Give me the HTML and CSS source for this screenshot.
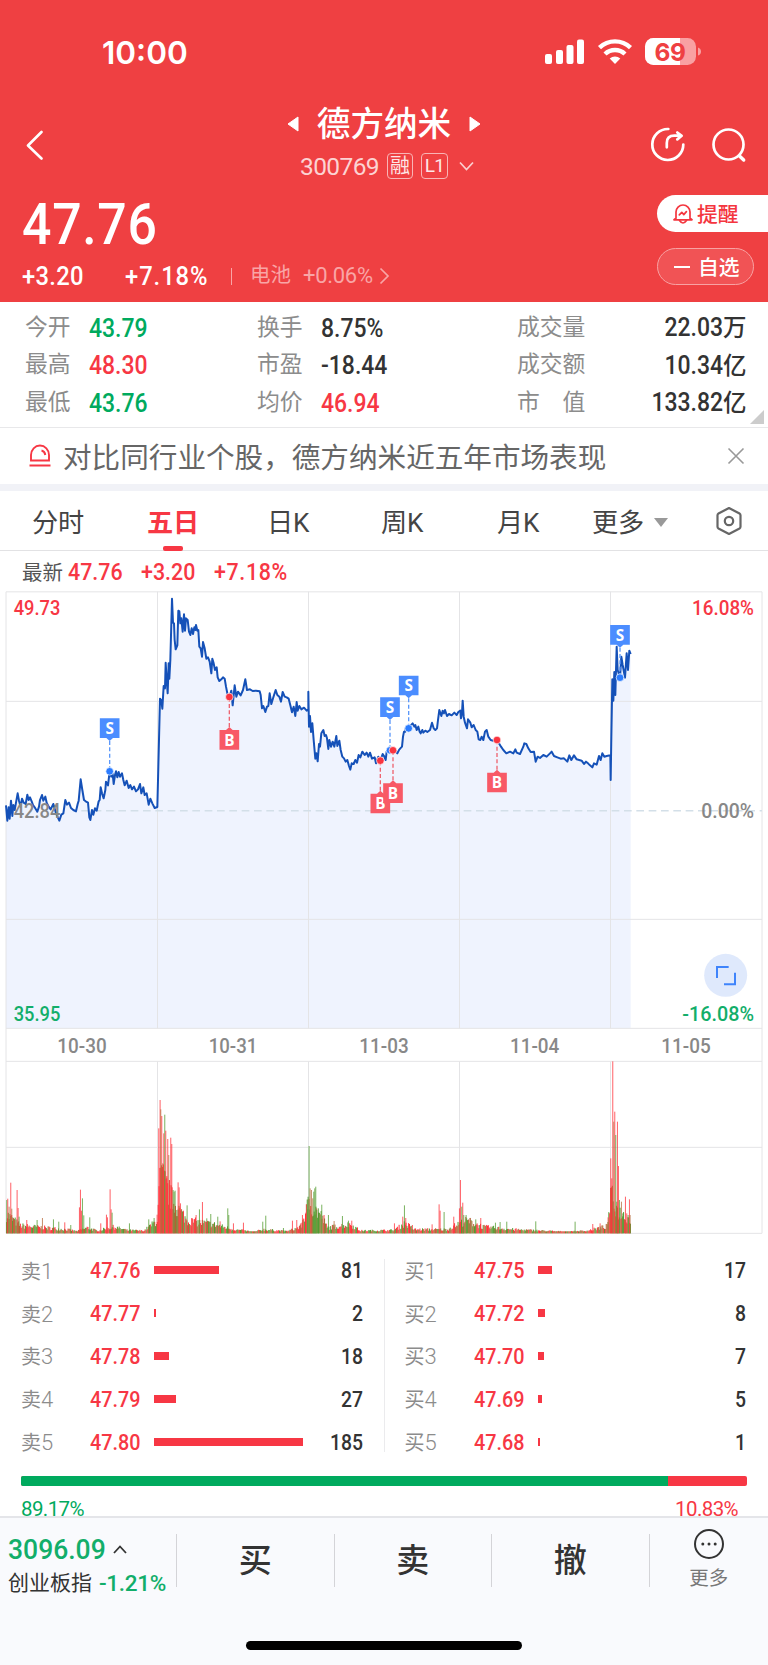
FILE: index.html
```html
<!DOCTYPE html>
<html lang="zh-CN">
<head>
<meta charset="utf-8">
<title>德方纳米 300769</title>
<link rel="stylesheet" href="styles.css">
</head>
<body>
<div class="app">
  <header class="hero">
    <div class="status">
      <span class="clock">10:00</span>
      <svg class="status-icons" width="160" height="38" viewBox="0 -5 160 38">
        <g fill="#fff">
          <rect x="1" y="16" width="7" height="10" rx="2"/><rect x="12" y="12" width="7" height="14" rx="2"/>
          <rect x="22.500" y="7" width="7" height="19" rx="2"/><rect x="33" y="1.500" width="7" height="24.500" rx="2"/>
          <path d="M71 26l-5.300-5.600a8 8 0 0 1 10.600 0z"/>
        </g>
        <g fill="none" stroke="#fff" stroke-width="4.400">
          <path d="M55.500 9.600a22.500 22.500 0 0 1 31 0"/><path d="M61 16a14.500 14.500 0 0 1 20 0"/>
        </g>
        <rect x="101" y="0" width="51" height="27" rx="8.500" fill="#f9a0a2"/>
        <path d="M109.500 0H136v27h-26.500a8.500 8.500 0 0 1-8.500-8.500v-10a8.500 8.500 0 0 1 8.500-8.500z" fill="#fff"/>
        <path d="M154 9.500q3 1 3 4t-3 4z" fill="#f9a0a2"/>
        <text x="126" y="22.500" text-anchor="middle" class="battery-text">69</text>
      </svg>
    </div>
    <div class="nav">
      <svg class="back" width="20" height="30" viewBox="0 0 20 30"><path d="M16.500 2L3 15.500l13.500 13" fill="none" stroke="#fff" stroke-width="2.600" stroke-linecap="round" stroke-linejoin="round"/></svg>
      <div class="name-block">
        <div class="name-row">
          <svg width="12" height="18" viewBox="0 0 12 18"><path d="M11 2v14L1 9z" fill="#fff" stroke="#fff" stroke-linejoin="round"/></svg>
          <h1 class="name">德方纳米</h1>
          <svg width="12" height="18" viewBox="0 0 12 18"><path d="M1 2v14L11 9z" fill="#fff" stroke="#fff" stroke-linejoin="round"/></svg>
        </div>
        <div class="code-row">
          <span class="code">300769</span><span class="tag">融</span><span class="tag tag-l">L1</span>
          <svg width="15" height="10" viewBox="0 0 15 10"><path d="M1 1.500l6.500 7 6.500-7" fill="none" stroke="#fbd0d0" stroke-width="1.700"/></svg>
        </div>
      </div>
      <div class="nav-icons">
        <svg width="36" height="36" viewBox="0 0 36 36" fill="none" stroke="#fff" stroke-width="2.700" stroke-linecap="round" stroke-linejoin="round">
          <path d="M18.300 2A15.500 15.500 0 1 0 33.300 17.500"/><path d="M16.800 20.300v-4.300q0-7.300 7.500-7.300h6.500M27.300 5.500l4.400 3.300-4.400 3.600"/>
        </svg>
        <svg width="36" height="36" viewBox="0 0 36 36" fill="none" stroke="#fff" stroke-width="2.700" stroke-linecap="round">
          <circle cx="17.500" cy="17.500" r="15"/><path d="M28.500 29l4.200 4" stroke-width="3.400"/>
        </svg>
      </div>
    </div>
    <div class="quote">
      <div class="quote-main">
        <div class="price">47.76</div>
        <div class="change-row">
          <span class="chg">+3.20</span><span class="chg pct">+7.18%</span><i class="bar-sep"></i>
          <span class="sector">电池</span><span class="sector-num">+0.06%</span>
          <svg width="11" height="18" viewBox="0 0 11 18"><path d="M1.500 1.500L9 9l-7.500 7.500" fill="none" stroke="#f9a5a6" stroke-width="1.700"/></svg>
        </div>
      </div>
      <div class="actions">
        <div class="remind">
          <svg width="22" height="22" viewBox="0 0 22 22" fill="none" stroke="#f4363f" stroke-width="1.700" stroke-linejoin="round" stroke-linecap="round">
            <path d="M4 15.300V9a7 7 0 0 1 14 0v6.300l2 1.500H2z"/><path d="M7.500 17.500q3.500 5 7 0M7.300 11.800l2.500-2.500 2 2.300 2.600-3"/>
          </svg><span>提醒</span>
        </div>
        <div class="watch"><i></i><span>自选</span></div>
      </div>
    </div>
  </header>

  <section class="stats">
    <span class="k">今开</span><span class="v down">43.79</span><span class="k">换手</span><span class="v">8.75%</span><span class="k">成交量</span><span class="v r">22.03<b>万</b></span>
    <span class="k">最高</span><span class="v up">48.30</span><span class="k">市盈</span><span class="v">-18.44</span><span class="k">成交额</span><span class="v r">10.34<b>亿</b></span>
    <span class="k">最低</span><span class="v down">43.76</span><span class="k">均价</span><span class="v up">46.94</span><span class="k">市　值</span><span class="v r">133.82<b>亿</b></span>
    <i class="corner"></i>
  </section>

  <section class="notice">
    <svg width="24" height="24" viewBox="0 0 24 24" fill="none" stroke="#f73744" stroke-width="1.900"><path d="M3 16.500V11a9 9.500 0 0 1 18 0v5.500zM1.500 21.500h21"/><path d="M13.500 6.500q3.300.8 3.800 4.500"/></svg>
    <span class="notice-text">对比同行业个股，德方纳米近五年市场表现</span>
    <svg width="18" height="18" viewBox="0 0 18 18"><path d="M1.500 1.500l15 15M16.500 1.500l-15 15" stroke="#999" stroke-width="1.600"/></svg>
  </section>

  <nav class="tabs">
    <span>分时</span><span class="active">五日</span><span>日K</span><span>周K</span><span>月K</span>
    <span class="more">更多<i></i></span>
    <svg width="28" height="30" viewBox="0 0 28 30" fill="none" stroke="#666" stroke-width="2.200" stroke-linejoin="round"><path d="M14 2l10.500 5.500q1 .6 1 1.800v11.400q0 1.200-1 1.800L14 28 3.500 22.500q-1-.6-1-1.800V9.300q0-1.200 1-1.800z"/><circle cx="14" cy="15" r="4.200"/></svg>
  </nav>

  <div class="latest"><span class="latest-k">最新</span><span>47.76</span><span>+3.20</span><span class="latest-pct">+7.18%</span></div>

  <svg class="chart" width="768" height="643" viewBox="0 33 2304 1929">
    <path id="area" class="area"/>
    <g class="grid">
      <path d="M18 35.500H2286V1960H18zM18 364H2286M18 1018H2286M18 1345H2286M18 1444H2286M18 1702H2286"/>
      <path d="M472.500 35V1345M925.500 35V1345M1378.500 35V1345M1831.500 35V1345M472.500 1444V1960M925.500 1444V1960M1378.500 1444V1960M1831.500 1444V1960"/>
    </g>
    <path class="zero" d="M244 692.500H2286"/>
    <path id="line" class="line"/>
    <g class="axis">
      <text x="41" y="104" textLength="140" lengthAdjust="spacingAndGlyphs" class="t-up">49.73</text>
      <text x="41" y="713" textLength="140" lengthAdjust="spacingAndGlyphs" class="t-flat">42.84</text>
      <text x="41" y="1322" textLength="140" lengthAdjust="spacingAndGlyphs" class="t-down">35.95</text>
      <text x="2076" y="104" textLength="186" lengthAdjust="spacingAndGlyphs" class="t-up">16.08%</text>
      <text x="2104" y="713" textLength="158" lengthAdjust="spacingAndGlyphs" class="t-flat">0.00%</text>
      <text x="2047" y="1322" textLength="215" lengthAdjust="spacingAndGlyphs" class="t-down">-16.08%</text>
      <g class="dates">
        <text x="172" y="1420" textLength="148" lengthAdjust="spacingAndGlyphs">10-30</text>
        <text x="626" y="1420" textLength="146" lengthAdjust="spacingAndGlyphs">10-31</text>
        <text x="1078" y="1420" textLength="148" lengthAdjust="spacingAndGlyphs">11-03</text>
        <text x="1530" y="1420" textLength="148" lengthAdjust="spacingAndGlyphs">11-04</text>
        <text x="1984" y="1420" textLength="148" lengthAdjust="spacingAndGlyphs">11-05</text>
      </g>
    </g>
    <g id="volume"></g>
    <g id="marks" class="marks"></g>
    <g transform="translate(2177 1186)"><circle r="64.500" fill="#dfe9fc"/><path d="M-26 8V-25H9M-5 27H28V-8" fill="none" stroke="#3f84fb" stroke-width="6"/></g>
  </svg>

  <section class="book">
    <div class="side">
      <div class="row"><span class="lv">卖<em>1</em></span><span class="p">47.76</span><span class="track"><i style="width:65px"></i></span><span class="q">81</span></div>
      <div class="row"><span class="lv">卖<em>2</em></span><span class="p">47.77</span><span class="track"><i style="width:2px"></i></span><span class="q">2</span></div>
      <div class="row"><span class="lv">卖<em>3</em></span><span class="p">47.78</span><span class="track"><i style="width:15px"></i></span><span class="q">18</span></div>
      <div class="row"><span class="lv">卖<em>4</em></span><span class="p">47.79</span><span class="track"><i style="width:22px"></i></span><span class="q">27</span></div>
      <div class="row"><span class="lv">卖<em>5</em></span><span class="p">47.80</span><span class="track"><i style="width:149px"></i></span><span class="q">185</span></div>
    </div>
    <i class="book-line"></i>
    <div class="side">
      <div class="row"><span class="lv">买<em>1</em></span><span class="p">47.75</span><span class="track"><i style="width:14px"></i></span><span class="q">17</span></div>
      <div class="row"><span class="lv">买<em>2</em></span><span class="p">47.72</span><span class="track"><i style="width:7px"></i></span><span class="q">8</span></div>
      <div class="row"><span class="lv">买<em>3</em></span><span class="p">47.70</span><span class="track"><i style="width:6px"></i></span><span class="q">7</span></div>
      <div class="row"><span class="lv">买<em>4</em></span><span class="p">47.69</span><span class="track"><i style="width:4px"></i></span><span class="q">5</span></div>
      <div class="row"><span class="lv">买<em>5</em></span><span class="p">47.68</span><span class="track"><i style="width:2px"></i></span><span class="q">1</span></div>
    </div>
  </section>
  <section class="ratio">
    <div class="ratio-bar"><i style="width:89.17%"></i></div>
    <div class="ratio-text"><span class="down">89.17%</span><span class="up">10.83%</span></div>
  </section>

  <footer class="dock">
    <div class="dock-row">
      <div class="index">
        <div class="index-top"><span>3096.09</span><svg width="14" height="9" viewBox="0 0 14 9"><path d="M1 8l6-6.500L13 8" fill="none" stroke="#333" stroke-width="1.800"/></svg></div>
        <div class="index-sub">创业板指<span>-1.21%</span></div>
      </div>
      <div class="trade">买</div><div class="trade">卖</div><div class="trade">撤</div>
      <div class="dock-more">
        <svg width="32" height="32" viewBox="0 0 32 32"><circle cx="16" cy="16" r="14" fill="none" stroke="#333" stroke-width="2"/><g fill="#333"><circle cx="9.800" cy="16" r="1.500"/><circle cx="16" cy="16" r="1.500"/><circle cx="22.200" cy="16" r="1.500"/></g></svg>
        <span>更多</span>
      </div>
    </div>
    <i class="home"></i>
  </footer>
</div>
<script src="chart.js"></script>
</body>
</html>
```

FILE: styles.css
```css
* { box-sizing: border-box; }
body { margin: 0; background: #fff; color: #333; font-family: Roboto, "Noto Sans CJK SC", sans-serif; }
i, em, b { font-style: normal; font-weight: inherit; }
svg { display: block; flex: none; }
.app { width: 768px; height: 1665px; overflow: hidden; display: flex; flex-direction: column; white-space: nowrap; }
.app > * { flex: none; }
.up { color: #f73744; }
.down { color: #00aa5e; }

.hero { height: 302px; background: #ef4042; color: #fff; display: flex; flex-direction: column; }
.status { height: 90px; padding: 33px 64px 0 102px; display: flex; justify-content: space-between; }
.status-icons { margin-top: 0; }
.clock { margin-top: 5px; font: 600 31.500px/30px Inter, sans-serif; letter-spacing: 0; }
.battery-text { font: 700 24.500px Inter, sans-serif; fill: #ef4042; letter-spacing: -0.5px; }
.nav { height: 100px; padding: 0 21px 0 25px; display: grid; grid-template-columns: 1fr 240px 1fr; }
.back { margin-top: 40px; }
.name-row { display: flex; align-items: center; justify-content: center; gap: 18px; height: 64px; margin: 2px 4px 0 0; }
.name { margin: 0; font-size: 33.600px; line-height: 40px; font-weight: 500; margin-top: 1px; }
.code-row { display: flex; align-items: center; height: 26px; margin-top: -3px; padding-left: 34px; }
.code { width: 80px; font-size: 24.500px; letter-spacing: -0.6px; color: #fcd3d3; margin-top: 1px; }
.tag { margin-left: 7px; width: 26px; height: 26px; border: 1.500px solid #f9b4b5; border-radius: 4px; font-size: 20px; line-height: 24px; text-align: center; color: #fde6e6; }
.tag-l { margin: 0 11px 0 8px; width: 27px; font-size: 19px; font-weight: 400; letter-spacing: -0.8px; }
.nav-icons { display: flex; justify-content: flex-end; gap: 25px; padding-top: 37px; }
.quote { flex: 1; display: flex; justify-content: space-between; padding-left: 22px; }
.price { font-size: 57.500px; font-weight: 500; line-height: 66px; letter-spacing: 0.800px; margin-top: 2px; transform: scaleX(0.9); transform-origin: left; }
.change-row { display: flex; align-items: center; height: 26px; margin-top: 5px; }
.chg { width: 103px; font-size: 25px; font-weight: 500; letter-spacing: 0.300px; transform: scaleX(0.95); transform-origin: left; }
.chg.pct { width: 106px; letter-spacing: 1px; }
.bar-sep { width: 1px; height: 17px; background: #f9a5a6; margin-right: 18px; }
.sector { font-size: 20.500px; color: #f9a5a6; width: 53px; line-height: 26px; margin-top: -2px; }
.sector-num { font-size: 22px; color: #f9a5a6; width: 76px; letter-spacing: -0.3px; margin-top: -1px; }
.actions { width: 111px; padding-top: 5px; font-size: 20.800px; font-weight: 500; }
.actions span { margin-top: -2px; }
.remind { height: 37px; border-radius: 19px 0 0 19px; background: #fff; color: #f4363f; display: flex; align-items: center; padding-left: 15px; gap: 3px; }
.watch { margin-top: 16px; width: 97px; height: 37px; border-radius: 19px; border: 1px solid #f8a2a3; background: #f15355; display: flex; align-items: center; padding-left: 16px; gap: 8px; }
.watch i { width: 16px; height: 2px; background: #fff; }

.stats { position: relative; height: 126px; padding: 6px 22px 0 25px; display: grid; grid-template-columns: 64px 168px 64px 196px 91px 1fr; grid-auto-rows: 37.500px; align-items: center; border-bottom: 1.500px solid #e8e8ea; }
.k { font-size: 22.800px; color: #8c8c8c; line-height: 36px; padding-top: 2px; }
.v { font-size: 25.500px; font-weight: 500; line-height: 36px; padding-top: 2px; transform: scaleX(0.9); transform-origin: left; }
.r { text-align: right; transform-origin: right; }
.r b { display: inline-block; margin-left: 2px; font-size: 23.500px; transform: scaleX(1.110); transform-origin: right; }
.corner { position: absolute; right: 4px; bottom: 3px; border-left: 14px solid transparent; border-bottom: 14px solid #ccc; }
.notice { height: 63px; border-bottom: 7px solid #f1f2f7; padding: 0 23px 0 28px; display: flex; align-items: center; }
.notice-text { flex: 1; margin-left: 11px; font-size: 28.600px; line-height: 40px; color: #666; padding-top: 3px; }

.tabs { height: 60px; border-bottom: 1.500px solid #e2e2e4; padding: 0 27px 0 32px; display: grid; grid-template-columns: 115px 120px 114px 116px 95px 123px 1fr; align-items: center; font-size: 26.200px; line-height: 54px; color: #444; }
.tabs span { letter-spacing: -0.2px; padding-top: 4px; }
.tabs .active { color: #f73744; font-weight: 700; width: 51px; position: relative; }
.tabs svg { margin-top: 1px; }
.active::after { content: ""; position: absolute; left: 16px; bottom: -1px; width: 20px; height: 5px; border-radius: 2px; background: #f73744; }
.more { display: flex; align-items: center; gap: 10px; }
.more i { border: 7px solid transparent; border-top: 9px solid #999; border-bottom: 0; }
.latest { height: 40px; padding-left: 22px; padding-top: 3px; display: flex; align-items: center; color: #f73744; font-size: 23px; font-weight: 500; }
.latest span { width: 73px; transform: scaleX(0.930); transform-origin: left; }
.latest .latest-pct { letter-spacing: 0.700px; }
.latest .latest-k { width: 46px; font-size: 20.500px; font-weight: 400; color: #555; transform: none; margin-top: -3px; }

.area { fill: #eff3fe; }
.grid { fill: none; stroke: #e4e4e6; stroke-width: 3; }
.zero { fill: none; stroke: #d3dfe8; stroke-width: 4.500; stroke-dasharray: 23 14; }
.line { fill: none; stroke: #1551b8; stroke-width: 6; stroke-linejoin: round; }
.axis text { font-size: 60px; font-weight: 500; }
.t-up { fill: #f73744; }
.t-down { fill: #12ae6a; }
.t-flat, .dates { fill: #888; }
.marks text { font: 700 46px "Open Sans", sans-serif; fill: #fff; text-anchor: middle; }

.book { height: 235px; padding: 15px 22px 0 21px; display: flex; }
.side { flex: 1; }
.side:first-child { padding-right: 21px; }
.side:last-child { padding-left: 20px; }
.book-line { width: 1px; height: 193px; margin-top: 10px; background: #ebebed; }
.row { height: 42.800px; display: flex; align-items: center; }
.lv { width: 69px; font-size: 20px; color: #8c8c8c; }
.lv em { font-size: 22px; font-weight: 300; }
.p { width: 64px; font-size: 22.500px; font-weight: 500; color: #f73744; transform: scaleX(0.880); transform-origin: left; }
.track { flex: 1; }
.track i { display: block; height: 8px; background: #f73744; }
.q { width: 50px; margin-left: -30px; text-align: right; font-size: 22.500px; font-weight: 500; transform: scaleX(0.860); transform-origin: right; }
.ratio { height: 47px; padding: 7px 21px 0; overflow: hidden; }
.ratio-bar { height: 10px; border-radius: 2px; overflow: hidden; background: #f73744; }
.ratio-bar i { display: block; height: 10px; background: #00aa5e; }
.ratio-text { display: flex; justify-content: space-between; padding: 12px 9px 0 0; font-size: 20.500px; letter-spacing: -0.600px; line-height: 22px; }

.dock { height: 149px; background: #f9fafd; border-top: 2px solid #e4e5e9; display: flex; flex-direction: column; align-items: center; }
.dock-row { width: 768px; height: 123px; padding-top: 16px; display: flex; align-items: flex-start; }
.index { width: 176px; padding-left: 8px; }
.index-top { height: 38px; padding-bottom: 7px; display: flex; align-items: center; color: #12ae6a; }
.index-top span { width: 105px; font-size: 28.500px; font-weight: 500; transform: scaleX(0.930); transform-origin: left; }
.index-sub { display: flex; justify-content: space-between; width: 158px; font-size: 21px; line-height: 22px; }
.index-sub span { color: #12ae6a; font-size: 22.500px; font-weight: 500; letter-spacing: -0.300px; }
.trade { flex: 0 0 157.500px; height: 53px; border-left: 1.500px solid #d4d4d8; font-size: 33px; font-weight: 500; line-height: 53px; text-align: center; }
.dock-more { flex: 1; height: 53px; border-left: 1.500px solid #d4d4d8; display: flex; flex-direction: column; align-items: center; font-size: 19.500px; line-height: 24px; color: #777; }
.dock-more svg { margin: -6px 0 7px; }
.home { width: 276px; height: 9px; border-radius: 5px; background: #000; }
```

FILE: chart.js
```javascript
const NS = 'http://www.w3.org/2000/svg';

const price = `18,676 22,722 26,682 29,716 33,662 37,708 40,675 44,690 48,668 53,640 57,662 62,680 66,656 71,668 77,672 82,644 86,660 90,652 95,664 99,675 104,682 112,695 117,680 120,660 126,645 130,662 136,650 140,668 146,680 152,688 160,672 168,700 178,722 184,704 190,700 196,660 201,674 207,668 213,684 220,690 228,694 233,672 236,662 242,598 247,630 252,660 257,664 264,668 268,712 271,720 276,690 280,704 285,685 290,692 296,664 299,660 302,622 306,640 311,655 316,630 318,605 324,616 329,574 334,590 338,582 341,612 345,585 348,574 352,592 356,576 360,590 366,580 370,600 374,616 380,602 386,624 391,615 396,628 402,620 408,634 414,628 420,612 424,640 430,622 434,645 440,640 446,674 451,656 457,670 464,684 472,681
475,560 480,356 484,362 487,386 491,318 495,325 497,248 500,300 503,340 506,250 508,296 511,240 516,56 519,128 522,130 524,180 527,208 532,196 535,92 538,94 541,130 544,115 548,155 552,103 555,152 558,115 563,120 567,155 571,165 575,145 579,162 583,142 586,150 588,135 592,152 595,150 598,200 602,205 606,230 609,186 614,205 619,236 624,232 629,245 634,280 637,236 641,250 645,270 650,262 653,292 658,303 664,298 669,292 674,296 678,320 683,345 688,351 694,332 698,376 704,316 709,350 714,335 722,346 729,330 736,298 741,330 750,328 758,333 768,332 779,334 782,345 786,385 790,378 796,396 801,380 805,378 809,340 814,372 820,352 827,330 832,345 838,350 843,365 848,336 854,350 860,352 866,356 871,376 876,397 881,380 886,408 890,366 893,392 898,378 904,388 912,383 920,392 925,388
925,335 927,440 930,408 933,456 937,430 941,480 946,536 949,520 953,544 957,492 960,500 964,460 970,450 974,468 978,465 981,475 985,507 988,480 993,500 998,485 1003,500 1009,468 1012,498 1018,482 1022,510 1027,530 1032,535 1037,545 1042,540 1047,558 1051,569 1055,550 1061,552 1066,540 1071,548 1076,525 1081,532 1087,515 1094,525 1100,518 1105,530 1110,518 1116,536 1124,532 1128,550 1135,530 1141,542 1148,522 1152,528 1157,540 1160,515 1167,510 1179,511 1188,515 1192,520 1197,510 1201,505 1206,500 1209,470 1212,455 1216,455 1218,440 1226,445 1232,436 1238,430 1243,440 1246,435 1250,450 1255,440 1259,455 1262,460 1267,450 1270,458 1276,452 1282,456 1290,450 1296,428 1301,445 1306,450 1311,445 1314,420 1318,390 1324,408 1328,392 1332,400 1335,390 1341,408 1347,402 1355,406 1363,398 1370,405 1375,396
1381,392 1383,415 1386,398 1388,362 1391,410 1395,428 1401,445 1404,418 1411,428 1415,442 1421,435 1427,450 1432,455 1436,478 1441,480 1445,470 1450,480 1455,455 1460,450 1465,470 1472,480 1480,482 1491,480 1503,500 1510,510 1519,520 1530,515 1540,520 1546,508 1550,518 1560,522 1570,500 1573,490 1579,492 1585,505 1592,516 1602,515 1607,545 1613,530 1620,534 1630,525 1640,530 1650,520 1655,515 1662,528 1672,532 1682,536 1692,535 1702,545 1708,526 1714,540 1722,526 1730,538 1745,542 1752,552 1758,545 1764,550 1770,556 1777,562 1782,550 1790,554 1797,528 1802,540 1807,520 1813,530 1820,528 1831,526
1832,600 1834,470 1837,298 1840,362 1843,276 1846,345 1850,200 1853,270 1860,293 1864,230 1868,255 1875,293 1880,220 1884,270 1888,212 1892,222`.replace(/\s+/g, ' L');
document.getElementById('line').setAttribute('d', 'M' + price);
document.getElementById('area').setAttribute('d', 'M' + price + ' V1345 H18 Z');

function add(parent, tag, attrs, text) {
  const el = document.createElementNS(NS, tag);
  for (const key in attrs) el.setAttribute(key, attrs[key]);
  if (text) el.textContent = text;
  parent.appendChild(el);
}

/* Trade markers: side, x, price-point y, label top */
const marks = document.getElementById('marks');
[['S', 329, 574, 415], ['B', 688, 351, 450], ['B', 1141, 542, 641], ['S', 1170, 511, 352],
 ['B', 1179, 511, 610], ['S', 1226, 445, 287], ['B', 1491, 480, 578], ['S', 1860, 293, 135]].forEach(([side, x, y, top]) => {
  const sell = side === 'S';
  const tip = sell ? top + 68 : top - 9;
  const edge = sell ? top + 59 : top;
  add(marks, 'path', { d: `M${x} ${tip}V${y}`, stroke: sell ? '#5c98fa' : '#ee6470', 'stroke-width': 4, 'stroke-dasharray': '12 7' });
  add(marks, 'path', { d: `M${x - 29.5} ${top}h59v59h-59zM${x - 10} ${edge}L${x} ${tip}L${x + 10} ${edge}z`, fill: sell ? '#4b8dff' : '#f85966' });
  add(marks, 'circle', { cx: x, cy: y, r: 11.5, fill: sell ? '#2b7cff' : '#f93440', stroke: '#fff', 'stroke-width': 2 });
  add(marks, 'text', { x, y: top + 47 }, side);
});

/* Volume: general level by x, then individual spikes */
const base = [[18,75],[60,30],[200,15],[230,8],[260,22],[290,10],[340,25],[380,12],[430,10],[470,50],[480,230],[520,120],[560,50],[640,35],[700,15],[760,6],[790,15],[860,8],[900,25],[925,120],[965,65],[980,22],[1050,35],[1080,10],[1180,12],[1215,40],[1240,15],[1340,15],[1370,35],[1400,50],[1450,25],[1540,15],[1700,6],[1760,10],[1820,28],[1832,150],[1850,90],[1893,50]];
const spikes = '20,100g 23,104r 27,80m 32,152r 35,74m 38,48g 44,40r 51,130r 54,76r 57,50g 80,40r 111,40g 127,46m 160,42g 176,35g 194,33r 212,25g 238,78r 241,131r 244,68r 247,105g 251,54g 269,48g 302,30r 319,56r 322,48r 330,132r 333,72r 336,62g 388,30g 446,42g 462,46g 471,56r 476,315r 480,400r 482,372m 485,352r 488,210m 491,300r 494,356g 497,308r 500,165r 503,283r 506,235m 509,145r 512,287r 515,268r 519,130g 522,125g 525,128g 530,70g 534,153r 537,138r 541,90r 550,68r 561,84g 575,45r 588,55r 598,72g 607,94r 620,45g 632,58g 653,50g 660,36r 683,75g 686,55g 700,30r 730,32r 788,35g 797,53g 850,16g 877,38r 890,40r 902,30r 907,55r 917,62r 923,72g 927,262g 930,135m 934,130m 938,105m 941,125g 944,135g 947,140g 950,70g 955,75g 965,86g 972,55r 985,55g 1002,37m 1027,52g 1045,38g 1055,38r 1183,30r 1208,50r 1213,84g 1217,46r 1237,25r 1296,27r 1317,87r 1320,68r 1332,64g 1361,50r 1378,75r 1381,160r 1385,80g 1388,92r 1391,55g 1398,55g 1410,46r 1427,42g 1442,46r 1486,32g 1500,34g 1520,35g 1607,36g 1725,35g 1778,28r 1800,30r 1824,48r 1832,225r 1835,165r 1838,516r 1841,335m 1844,365r 1847,295g 1850,95g 1852,335r 1855,202r 1858,100g 1864,95m 1868,60g 1876,110r 1880,60r 1884,55g 1888,102r 1890,55m';
const colors = { r: '#ff333b', g: '#559c32', m: '#b66c3c' };
const volume = document.getElementById('volume');
let seed = 7;
const random = () => (seed = (seed * 16807) % 2147483647) / 2147483647;
let k = 0;
for (let x = 18; x < 1890; x += 2.6) {
  while (base[k + 1][0] < x) k++;
  const [x0, h0] = base[k], [x1, h1] = base[k + 1];
  const level = h0 + (h1 - h0) * (x - x0) / (x1 - x0);
  const h = Math.max(6, level * (0.45 + random() * 0.6));
  const redShare = x > 472 && x < 520 ? 0.65 : x > 925 && x < 965 ? 0.15 : 0.42;
  const c = random();
  add(volume, 'rect', { x, y: 1960 - h, width: 3, height: h, fill: c < redShare ? colors.r : c < 0.82 ? colors.g : colors.m });
}
spikes.split(' ').forEach(s => {
  const [x, rest] = s.split(',');
  const h = parseInt(rest, 10);
  add(volume, 'rect', { x: x - 1.2, y: 1960 - h, width: 3, height: h, fill: colors[rest.slice(-1)], opacity: 0.78 });
});
```
